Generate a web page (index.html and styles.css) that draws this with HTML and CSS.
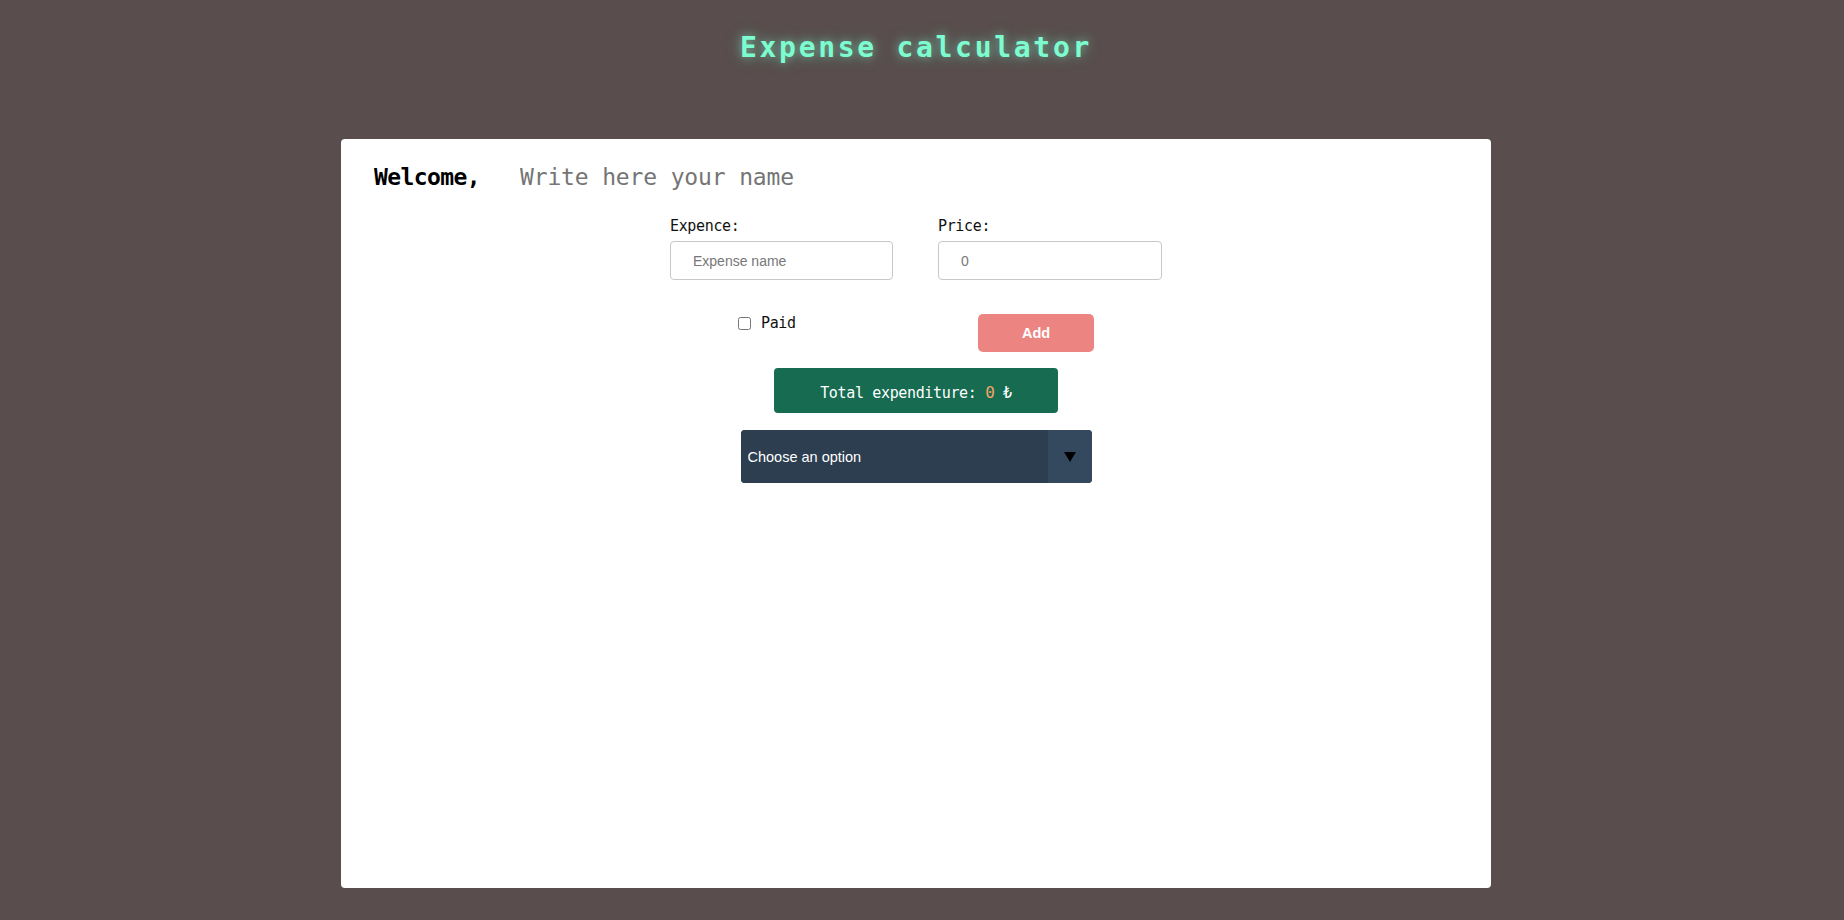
FILE: index.html
```html
<!DOCTYPE html>
<html lang="en">
<head>
<meta charset="utf-8">
<title>Expense calculator</title>
<link rel="stylesheet" href="styles.css">
</head>
<body>
  <div class="app">
    <h1 class="title">Expense calculator</h1>
    <main class="card">
      <div class="welcome">
        <span class="welcome-label">Welcome,</span>
        <input class="name-input" type="text" placeholder="Write here your name">
      </div>
      <form class="form">
        <div class="fields">
          <div class="field">
            <label class="field-label" for="expense">Expence:</label>
            <input class="field-input" id="expense" type="text" placeholder="Expense name">
          </div>
          <div class="field">
            <label class="field-label" for="price">Price:</label>
            <input class="field-input" id="price" type="number" placeholder="0">
          </div>
        </div>
        <div class="actions">
          <label class="paid"><input class="paid-box" type="checkbox"><span>Paid</span></label>
          <button class="add-btn" type="button">Add</button>
        </div>
      </form>
      <div class="total">Total expenditure: <span class="total-num">0</span> ₺</div>
      <div class="select-wrap">
        <select class="select">
          <option>Choose an option</option>
        </select>
        <div class="select-arrow"><span class="tri"></span></div>
      </div>
    </main>
  </div>
</body>
</html>
```

FILE: styles.css
```css
html, body {
  margin: 0;
  padding: 0;
}
body {
  background: #594d4d;
  min-height: 920px;
  font-family: "DejaVu Sans Mono", monospace;
}
.app {
  padding-right: 12px;
  display: flex;
  flex-direction: column;
  align-items: center;
}
.title {
  margin: 31px 0 0;
  font-size: 28px;
  line-height: 34px;
  font-weight: bold;
  letter-spacing: 2.7px;
  color: #7dfcd0;
  text-shadow: 0 0 10px rgba(127, 255, 212, 0.55), 0 0 18px rgba(127, 255, 212, 0.25);
}
.card {
  margin-top: 74px;
  width: 1150px;
  height: 749px;
  box-sizing: border-box;
  background: #fff;
  border-radius: 4px;
  padding-top: 24px;
  display: flex;
  flex-direction: column;
  align-items: center;
}
.welcome {
  align-self: stretch;
  display: flex;
  align-items: baseline;
  padding-left: 33px;
  height: 28px;
}
.welcome-label {
  font-size: 23px;
  line-height: 28px;
  font-weight: bold;
  letter-spacing: -0.6px;
  color: #000;
}
.name-input {
  margin-left: 40px;
  border: none;
  outline: none;
  padding: 0;
  width: 340px;
  height: 28px;
  font-family: "DejaVu Sans Mono", monospace;
  font-size: 23px;
  letter-spacing: -0.15px;
  color: #000;
  background: transparent;
}
.name-input::placeholder {
  color: #757575;
}
.form {
  margin: 26px 0 0;
  width: 492px;
}
.fields {
  display: grid;
  grid-template-columns: 223px 224px;
  column-gap: 45px;
}
.field-label {
  display: block;
  font-size: 15px;
  line-height: 18px;
  letter-spacing: -0.35px;
  color: #111;
  margin-bottom: 6px;
}
.field-input {
  display: block;
  box-sizing: border-box;
  width: 100%;
  height: 39px;
  border: 1px solid #c8c8c8;
  border-radius: 4px;
  padding: 0 0 0 22px;
  font-family: "Liberation Sans", Arial, sans-serif;
  font-size: 14px;
  color: #333;
  outline: none;
  -moz-appearance: textfield;
}
.field-input::-webkit-outer-spin-button,
.field-input::-webkit-inner-spin-button {
  -webkit-appearance: none;
  margin: 0;
}
.field-input::placeholder {
  color: #777;
}
.actions {
  margin-top: 33px;
  padding: 0 68px;
  display: flex;
  justify-content: space-between;
  align-items: flex-start;
}
.paid {
  display: flex;
  align-items: center;
  font-size: 15px;
  line-height: 20px;
  letter-spacing: -0.35px;
  color: #111;
}
.paid-box {
  margin: 0 10px 0 0;
  width: 13px;
  height: 13px;
}
.add-btn {
  margin-top: 1px;
  width: 116px;
  height: 38px;
  border: none;
  border-radius: 5px;
  background: #ec8582;
  color: #fff;
  font-family: "Liberation Sans", Arial, sans-serif;
  font-size: 14.5px;
  font-weight: bold;
  padding: 0;
  cursor: pointer;
}
.total {
  margin-top: 16px;
  width: 284px;
  height: 45px;
  box-sizing: border-box;
  padding-top: 4px;
  line-height: 41px;
  text-align: center;
  background: #166b50;
  border-radius: 4px;
  color: #fff;
  font-size: 15px;
  letter-spacing: -0.35px;
}
.total-num {
  color: #f2a565;
  font-size: 16px;
}
.select-wrap {
  margin-top: 17px;
  width: 351px;
  height: 53px;
  display: flex;
  border-radius: 4px;
  overflow: hidden;
  background: #2c3e50;
}
.select {
  flex: 1;
  -webkit-appearance: none;
  appearance: none;
  border: none;
  outline: none;
  background: #2c3e50;
  color: #fff;
  font-family: "Liberation Sans", Arial, sans-serif;
  font-size: 14.5px;
  padding: 0 0 0 7px;
  margin: 0;
  height: 53px;
}
.select-arrow {
  width: 44px;
  background: #34495e;
  display: flex;
  align-items: center;
  justify-content: center;
}
.tri {
  width: 0;
  height: 0;
  border-left: 6px solid transparent;
  border-right: 6px solid transparent;
  border-top: 10px solid #000;
}
```
